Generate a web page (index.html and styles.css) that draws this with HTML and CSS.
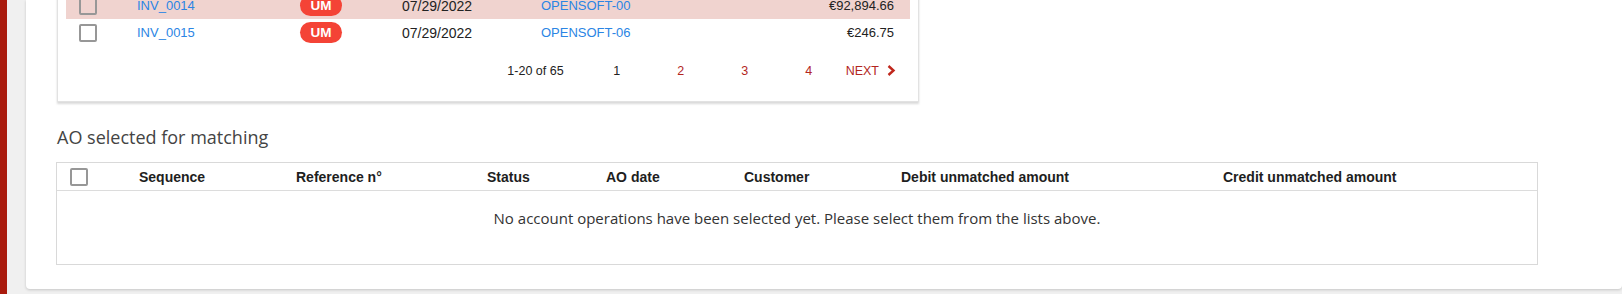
FILE: index.html
```html
<!DOCTYPE html>
<html>
<head>
<meta charset="utf-8">
<link rel="stylesheet" href="styles.css">
</head>
<body>
<div class="sidebar"></div>
<div class="main">
  <div class="card">
    <div class="results">
      <div class="row row-hl">
        <div class="cell cell-check"><span class="checkbox"></span></div>
        <div class="cell"><a class="link">INV_0014</a></div>
        <div class="cell"><span class="badge">UM</span></div>
        <div class="cell date">07/29/2022</div>
        <div class="cell"><a class="link">OPENSOFT-00</a></div>
        <div class="cell amount">€92,894.66</div>
      </div>
      <div class="row">
        <div class="cell cell-check"><span class="checkbox"></span></div>
        <div class="cell"><a class="link">INV_0015</a></div>
        <div class="cell"><span class="badge">UM</span></div>
        <div class="cell date">07/29/2022</div>
        <div class="cell"><a class="link">OPENSOFT-06</a></div>
        <div class="cell amount">€246.75</div>
      </div>
      <div class="pagination">
        <span class="range">1-20 of 65</span>
        <span class="page current">1</span>
        <span class="page">2</span>
        <span class="page">3</span>
        <span class="page">4</span>
        <span class="next">NEXT
          <svg class="chev" width="9" height="11" viewBox="0 0 9 11"><path d="M1.5 1 L6.5 5.5 L1.5 10" fill="none" stroke="#c0271c" stroke-width="2.4"/></svg>
        </span>
      </div>
    </div>

    <h2 class="title">AO selected for matching</h2>

    <div class="selected">
      <div class="thead">
        <div class="th th-check"><span class="checkbox"></span></div>
        <div class="th">Sequence</div>
        <div class="th">Reference n°</div>
        <div class="th">Status</div>
        <div class="th">AO date</div>
        <div class="th">Customer</div>
        <div class="th">Debit unmatched amount</div>
        <div class="th">Credit unmatched amount</div>
      </div>
      <div class="empty">No account operations have been selected yet. Please select them from the lists above.</div>
    </div>
  </div>
</div>
</body>
</html>
```

FILE: styles.css
```css
html, body {
  margin: 0;
  padding: 0;
}
body {
  background: #f0f0f0;
  display: flex;
  height: 294px;
  overflow: hidden;
  font-family: "Liberation Sans", Arial, sans-serif;
  color: #222;
}
.sidebar {
  width: 7px;
  flex: none;
  background: #a91b0d;
}
.main {
  flex: 1;
  padding-left: 19px;
  display: flex;
  flex-direction: column;
}
.card {
  background: #fff;
  border-radius: 0 0 4px 4px;
  box-shadow: 0 1px 3px rgba(0,0,0,0.18);
  padding: 0 0 26px 30px;
  height: 289px;
  box-sizing: border-box;
}
.results {
  margin-top: -8px;
  margin-left: 1px;
  width: 862px;
  box-sizing: border-box;
  padding: 0 8px;
  background: #fff;
  border: 1px solid #e2e2e2;
  border-top: none;
  box-shadow: 0 2px 2px rgba(0,0,0,0.15);
}
.row {
  display: grid;
  grid-template-columns: 71px 163px 102px 139px 1fr 160px;
  height: 27px;
  align-items: center;
  font-size: 13px;
}
.row-hl {
  background: #f0d3cf;
}
.cell-check {
  padding-left: 13px;
  display: flex;
  align-items: center;
}
.checkbox {
  display: inline-block;
  width: 18px;
  height: 18px;
  box-sizing: border-box;
  border: 2px solid #979797;
  border-radius: 2px;
}
.link {
  color: #2b85e4;
  text-decoration: none;
}
.badge {
  display: inline-flex;
  align-items: center;
  justify-content: center;
  width: 42px;
  height: 21px;
  border-radius: 11px;
  background: #f44336;
  color: #fff;
  font-weight: bold;
  font-size: 13.5px;
}
.date {
  font-size: 14px;
  color: #222;
}
.amount {
  text-align: right;
  padding-right: 16px;
  color: #222;
}
.pagination {
  display: flex;
  justify-content: flex-end;
  align-items: center;
  height: 47px;
  padding-right: 14px;
  padding-bottom: 7px;
  font-size: 12.5px;
  margin-top: 1px;
}
.range {
  color: #222;
  margin-right: 21px;
}
.page {
  width: 64px;
  text-align: center;
  color: #b3261e;
}
.page.current {
  color: #222;
}
.next {
  margin-left: 5px;
  color: #b3261e;
  display: inline-flex;
  align-items: center;
  gap: 8px;
}
.chev {
  display: block;
}
.title {
  margin: 23px 0 0 1px;
  font-family: "Open Sans", sans-serif;
  font-weight: 400;
  font-size: 18px;
  line-height: 24px;
  color: #444;
}
.selected {
  margin-top: 13px;
  width: 1482px;
  border: 1px solid #d9d9d9;
  box-sizing: border-box;
}
.thead {
  display: grid;
  grid-template-columns: 82px 157px 191px 119px 138px 157px 322px 1fr;
  height: 27px;
  align-items: center;
  border-bottom: 1px solid #dcdcdc;
}
.th {
  font-weight: bold;
  font-size: 14px;
  color: #1e1e1e;
}
.th-check {
  padding-left: 13px;
  display: flex;
  align-items: center;
}
.empty {
  height: 73px;
  padding-top: 17px;
  box-sizing: border-box;
  text-align: center;
  font-family: "Open Sans", sans-serif;
  font-size: 15px;
  line-height: 20px;
  color: #333;
}
```
